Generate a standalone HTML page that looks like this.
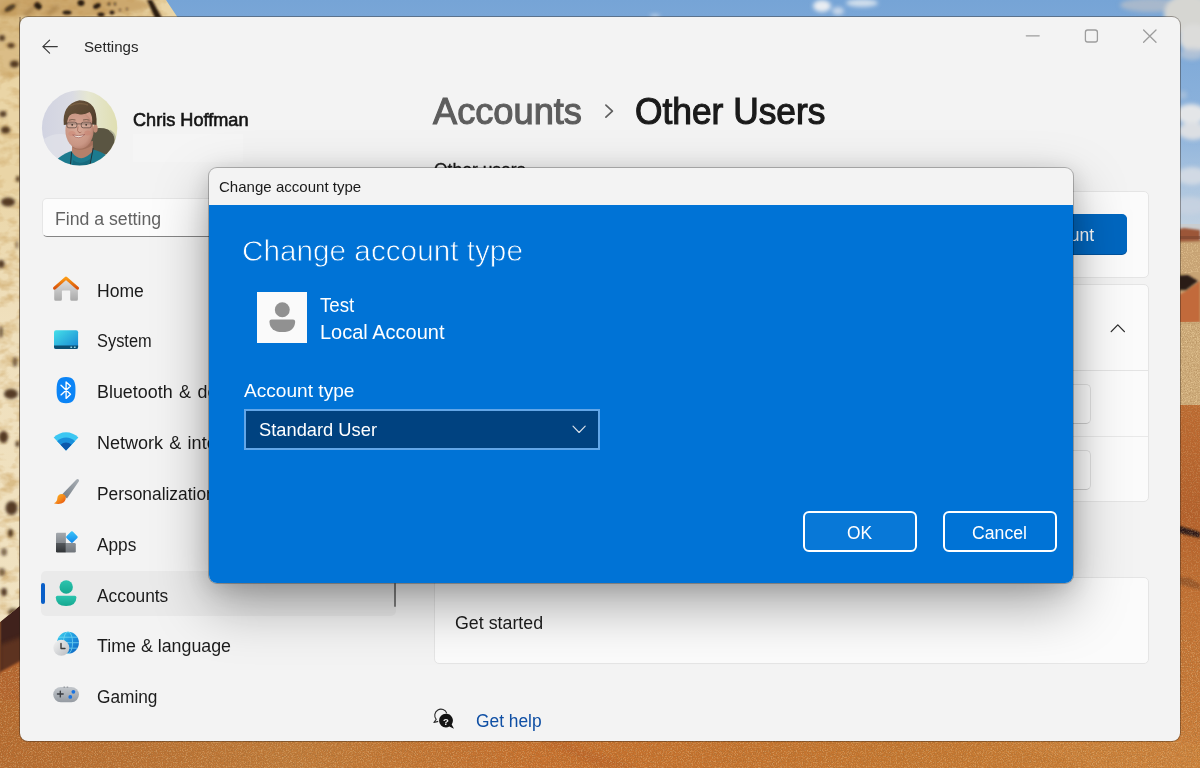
<!DOCTYPE html>
<html lang="en">
<head>
<meta charset="utf-8">
<title>Settings - Other Users</title>
<style>
*{box-sizing:border-box;margin:0;padding:0}
html,body{width:1200px;height:768px;overflow:hidden;background:#c07030}
body{position:relative;font-family:"Liberation Sans",sans-serif;color:#1b1b1b}
.abs{position:absolute}
.t{position:absolute;white-space:pre;line-height:1;transform-origin:0 0}
#wall{position:absolute;left:0;top:0;width:1200px;height:768px}
#win{position:absolute;left:20px;top:17px;width:1160px;height:724px;background:#f3f3f3;border-radius:8px;overflow:hidden;box-shadow:0 0 0 1px rgba(40,30,20,.38)}
/* coordinates inside #win are page coords minus (20,17); use .p wrapper to keep page coords */
#p{position:absolute;left:-20px;top:-17px;width:1200px;height:768px}
.card{position:absolute;background:#fbfbfb;border:1px solid #e5e5e5;border-radius:5px}
.nav{position:absolute;left:97px;font-size:17.5px;color:#1b1b1b}
#dlg{position:absolute;left:209px;top:168px;width:864px;height:415px;border-radius:8px;background:#f3f3f3;overflow:hidden;
 box-shadow:0 0 0 1px rgba(0,0,0,.24),0 22px 54px rgba(0,0,0,.34),0 4px 22px rgba(0,0,0,.15)}
#dtitle{position:absolute;left:0;top:0;width:100%;height:37px;background:#f3f3f3}
.dbtn{position:absolute;width:114.1px;height:40.8px;border:2.5px solid #fff;border-radius:6px}
</style>
</head>
<body>
<!-- WALLPAPER -->
<svg id="wall" viewBox="0 0 1200 768">
<defs>
  <linearGradient id="sky" x1="0" y1="0" x2="0" y2="1">
    <stop offset="0" stop-color="#76a4d6"/><stop offset="0.55" stop-color="#8fb4dc"/><stop offset="1" stop-color="#c9d6e2"/>
  </linearGradient>
  <linearGradient id="sandB" x1="0" y1="0" x2="1" y2="0">
    <stop offset="0" stop-color="#b66a2e"/><stop offset="0.25" stop-color="#c07a38"/><stop offset="0.45" stop-color="#c66f2c"/><stop offset="0.75" stop-color="#c4762f"/><stop offset="1" stop-color="#cb8038"/>
  </linearGradient>
  <linearGradient id="furL" x1="0" y1="0" x2="0" y2="1"><stop offset="0" stop-color="#f3e7cc" stop-opacity="0"/><stop offset=".3" stop-color="#f3e7cc" stop-opacity=".6"/><stop offset="1" stop-color="#f4e9d0" stop-opacity=".65"/></linearGradient>
  <linearGradient id="duneR" x1="0" y1="0" x2="0" y2="1"><stop offset="0" stop-color="#bd6a31"/><stop offset=".3" stop-color="#b4602b"/><stop offset=".55" stop-color="#c27133"/><stop offset="1" stop-color="#cb7e39"/></linearGradient>
  <filter id="bl1" x="-20%" y="-20%" width="140%" height="140%"><feGaussianBlur stdDeviation="1"/></filter>
  <filter id="bl15" x="-40%" y="-40%" width="180%" height="180%"><feGaussianBlur stdDeviation="1.5"/></filter>
  <filter id="bl2" x="-30%" y="-30%" width="160%" height="160%"><feGaussianBlur stdDeviation="2.2"/></filter>
  <filter id="bl4" x="-50%" y="-50%" width="200%" height="200%"><feGaussianBlur stdDeviation="4"/></filter>
  <filter id="grain" x="0" y="0" width="100%" height="100%">
    <feTurbulence type="fractalNoise" baseFrequency="0.85" numOctaves="2" seed="4" result="n"/>
    <feColorMatrix in="n" type="matrix" values="0 0 0 0 0.30  0 0 0 0 0.14  0 0 0 0 0.04  2.4 2.4 0 0 -2.25"/>
  </filter>
  <filter id="grainL" x="0" y="0" width="100%" height="100%">
    <feTurbulence type="fractalNoise" baseFrequency="0.8" numOctaves="2" seed="11" result="n"/>
    <feColorMatrix in="n" type="matrix" values="0 0 0 0 0.96  0 0 0 0 0.74  0 0 0 0 0.42  2.4 2.4 0 0 -2.3"/>
  </filter>
  <filter id="fur" x="0" y="0" width="100%" height="100%">
    <feTurbulence type="fractalNoise" baseFrequency="0.055 0.09" numOctaves="3" seed="9" result="n"/>
    <feColorMatrix in="n" type="matrix" values="0 0 0 0 0.62  0 0 0 0 0.40  0 0 0 0 0.15  3.0 0 0 0 -1.32"/>
  </filter>
  <clipPath id="sandclip"><path d="M0 674 L24 661 V741 H1180 V640 H1200 V768 H0 Z"/></clipPath>
  <clipPath id="cheetah"><path d="M0 0 H166 L190 36 V560 L22 604 L0 622 Z"/></clipPath>
</defs>
<!-- sky -->
<rect x="0" y="0" width="1200" height="240" fill="url(#sky)"/>
<!-- top clouds -->
<g filter="url(#bl2)" fill="#e9edf2">
  <ellipse cx="822" cy="6" rx="9" ry="6"/><ellipse cx="838" cy="11" rx="6" ry="4" opacity=".7"/>
  <ellipse cx="862" cy="3" rx="16" ry="4" opacity=".8"/><ellipse cx="655" cy="16" rx="5" ry="2" opacity=".6"/>
  <ellipse cx="1150" cy="5" rx="30" ry="7" fill="#b4bdc9" opacity=".8"/>
  <ellipse cx="1188" cy="14" rx="24" ry="20" fill="#d6d6d2"/>
  <ellipse cx="1194" cy="38" rx="15" ry="14" fill="#dcdcda"/>
  <ellipse cx="1192" cy="54" rx="12" ry="6" fill="#b9c6d6" opacity=".8"/>
  <ellipse cx="1191" cy="114" rx="15" ry="10" fill="#e4e6e8"/>
  <ellipse cx="1193" cy="131" rx="15" ry="9" fill="#dcdfe3"/>
  <ellipse cx="1183" cy="95" rx="4" ry="4" fill="#b4c6dc" opacity=".7"/>
  <ellipse cx="1192" cy="176" rx="16" ry="9" fill="#d3dae4" opacity=".95"/>
  <ellipse cx="1190" cy="206" rx="18" ry="9" fill="#c6d2e0" opacity=".95"/>
</g>
<!-- right desert -->
<rect x="1170" y="224" width="30" height="20" fill="#c9cdd0"/>
<rect x="1170" y="240" width="30" height="180" fill="#c7a374"/>
<path d="M1170 231 L1184 228 L1200 230 V241 L1170 242 Z" fill="#9c5738" filter="url(#bl1)"/>
<rect x="1170" y="236" width="30" height="3" fill="#7c4630" opacity=".6"/>
<path d="M1170 300 L1184 292 L1200 281 V322 L1170 324 Z" fill="#c26a3b" filter="url(#bl1)"/>
<path d="M1170 276 L1188 275 L1198 281 L1186 290 L1170 290 Z" fill="#2b1a14" filter="url(#bl1)"/>
<rect x="1170" y="322" width="30" height="86" fill="#cdab7a"/>
<rect x="1170" y="322" width="30" height="86" filter="url(#grain)" opacity=".3"/><rect x="1170" y="243" width="30" height="30" filter="url(#grainL)" opacity=".4"/><rect x="1170" y="324" width="30" height="82" filter="url(#grainL)" opacity=".45"/>
<rect x="1170" y="405" width="30" height="363" fill="url(#duneR)"/>
<path d="M1170 523 L1200 532 V538 L1170 531 Z" fill="#2a1812" filter="url(#bl1)"/>
<path d="M1170 576 L1190 578 L1200 584 V590 L1170 582 Z" fill="#7a4424" opacity=".55" filter="url(#bl1)"/>

<rect x="1170" y="405" width="30" height="236" filter="url(#grain)" opacity=".3"/><rect x="1170" y="405" width="30" height="236" filter="url(#grainL)" opacity=".2"/>
<!-- bottom sand -->
<path d="M0 640H1178V745H1200V768H0Z" fill="url(#sandB)"/>
<path d="M560 741 L640 768 H600 L540 741 Z" fill="#b85f26" opacity=".5" filter="url(#bl2)"/>
<path d="M1000 741 L1100 768 H1200 V741 Z" fill="#cf8540" opacity=".45" filter="url(#bl2)"/>

<!-- left: dark band below cheetah -->
<path d="M0 612 L24 596 V662 L0 674 Z" fill="#3f241b" filter="url(#bl1)"/><path d="M0 645 L24 636 V662 L0 674 Z" fill="#6b3b22" opacity=".7" filter="url(#bl2)"/>

<path d="M0 672 L24 659 V700 H0 Z" fill="#b5652f" filter="url(#bl1)"/>
<g clip-path="url(#sandclip)"><rect x="0" y="640" width="1200" height="128" filter="url(#grain)" opacity=".42"/><rect x="0" y="640" width="1200" height="128" filter="url(#grainL)" opacity=".3"/></g>
<!-- cheetah fur -->
<g clip-path="url(#cheetah)">
  <rect x="0" y="0" width="200" height="640" fill="#ead5a6"/><rect x="0" y="180" width="200" height="460" fill="url(#furL)"/>
  <rect x="0" y="0" width="200" height="640" filter="url(#fur)" opacity=".65"/>
  <g filter="url(#bl2)"><ellipse cx="62" cy="5" rx="88" ry="13" fill="#b5843f" opacity=".55"/><ellipse cx="8" cy="40" rx="14" ry="40" fill="#c39a58" opacity=".4"/>
    <path d="M2 14 L18 3 M24 16 L40 2 M48 14 L58 6" stroke="#7a5426" stroke-width="3" opacity=".5" fill="none"/></g>
  <g fill="#2b1a0d" filter="url(#bl1)">
    <ellipse cx="81" cy="3" rx="3.5" ry="3"/><ellipse cx="97" cy="6" rx="4" ry="2.5" transform="rotate(-25 97 6)"/>
    <ellipse cx="67" cy="12.5" rx="4.5" ry="2"/><ellipse cx="101" cy="14.5" rx="3.5" ry="2"/><ellipse cx="112" cy="12.5" rx="2.5" ry="2"/>
    <ellipse cx="109" cy="4" rx="1.6" ry="1.6" opacity=".7"/><ellipse cx="115" cy="4" rx="1.4" ry="1.4" opacity=".7"/>
    <ellipse cx="120" cy="10" rx="1.3" ry="1.3" opacity=".6"/><ellipse cx="127" cy="9" rx="1.3" ry="1.3" opacity=".6"/>
    <ellipse cx="38" cy="6" rx="4" ry="3" transform="rotate(40 38 6)"/><ellipse cx="10" cy="8" rx="6" ry="2.5" transform="rotate(-30 10 8)" opacity=".7"/>
    <path d="M147 0 L152 0 L162 18 L155 18 Z"/>
  </g>
  <g fill="#452a12" opacity=".9" filter="url(#bl15)">
    <ellipse cx="2" cy="38" rx="3" ry="3"/><ellipse cx="11" cy="45.5" rx="3.5" ry="2.5"/><ellipse cx="14.5" cy="64" rx="4.5" ry="3.5"/>
    <ellipse cx="3" cy="114" rx="3.5" ry="3"/><ellipse cx="5.5" cy="130" rx="4.5" ry="3.5"/><ellipse cx="18" cy="179" rx="2" ry="3"/>
    <ellipse cx="8" cy="202" rx="7" ry="4.5"/><ellipse cx="1" cy="264" rx="3.5" ry="4"/><ellipse cx="17" cy="245" rx="1.5" ry="4" opacity=".6"/>
    <ellipse cx="1" cy="332" rx="2" ry="6" opacity=".8"/><ellipse cx="15" cy="362" rx="2.5" ry="5" opacity=".7"/>
    <ellipse cx="11" cy="394" rx="7" ry="5"/><ellipse cx="3.5" cy="437" rx="4.5" ry="6"/><ellipse cx="17.5" cy="444" rx="2" ry="3"/>
    <ellipse cx="11.5" cy="508" rx="6" ry="7"/><ellipse cx="10.5" cy="533" rx="2.5" ry="4"/><ellipse cx="4" cy="552" rx="3" ry="4" opacity=".7"/>
    <ellipse cx="2" cy="572" rx="3" ry="4" opacity=".7"/><ellipse cx="4" cy="592" rx="3" ry="4"/><ellipse cx="13" cy="612" rx="5" ry="4" opacity=".8"/>
  </g>
  <rect x="19" y="17" width="2" height="600" fill="#4a3520" opacity=".35"/>
</g>

</svg>

<!-- SETTINGS WINDOW -->
<div id="win"><div id="p">
<!-- title bar -->
<svg class="abs" style="left:40px;top:38px" width="20" height="18" viewBox="40 38 20 18"><path d="M57.3 46.6H42.8M49.6 40.1L42.9 46.6L49.6 53.1" fill="none" stroke="#3a3a3a" stroke-width="1.2" stroke-linecap="round" stroke-linejoin="round"/></svg>
<span class="t" style="left:83.5px;top:39.4px;font-size:15px;color:#262626;transform:scaleX(1.005)">Settings</span>
<svg class="abs" style="left:1020px;top:24px" width="145" height="24" viewBox="1020 24 145 24" fill="none" stroke="#9d9d9d" stroke-width="1.3">
  <path d="M1026.3 35.8H1039.2" stroke-linecap="round"/>
  <rect x="1085.4" y="30" width="12" height="12" rx="2.2"/>
  <path d="M1143.6 30L1156 42.3M1156 30L1143.6 42.3" stroke-linecap="round"/>
</svg>

<!-- avatar -->
<svg class="abs" style="left:41px;top:89px" width="78" height="78" viewBox="41 89 78 78">
  <defs>
    <clipPath id="avc"><circle cx="79.6" cy="127.9" r="37.7"/></clipPath>
    <linearGradient id="avbg" x1="0" y1="0" x2="1" y2="0"><stop offset="0" stop-color="#d1d3e1"/><stop offset=".40" stop-color="#dadbe3"/><stop offset=".60" stop-color="#e6e7d2"/><stop offset="1" stop-color="#dfdeb0"/></linearGradient>
    <radialGradient id="avface" cx=".42" cy=".45" r=".65"><stop offset="0" stop-color="#d9aa98"/><stop offset=".7" stop-color="#c99684"/><stop offset="1" stop-color="#ad7663"/></radialGradient>
    <linearGradient id="avhair" x1="0" y1="0" x2="1" y2="1"><stop offset="0" stop-color="#6c563d"/><stop offset="1" stop-color="#4d3b2a"/></linearGradient>
    <filter id="avb" x="-20%" y="-20%" width="140%" height="140%"><feGaussianBlur stdDeviation=".75"/></filter>
  </defs>
  <g clip-path="url(#avc)">
    <rect x="41" y="89" width="78" height="78" fill="url(#avbg)"/>
    <ellipse cx="60" cy="150" rx="22" ry="16" fill="#e2e3ea" opacity=".7" filter="url(#avb)"/>
    <g filter="url(#avb)">
      <path d="M86 130 Q100 126.5 108 129.5 Q116.5 134 114.5 144 Q112 152.5 106 154.5 L86 151 Z" fill="#5a5442"/>
      <path d="M110 130.5 Q117 135 115 145" stroke="#a9ab94" stroke-width="1.6" fill="none" opacity=".8"/>
      <path d="M56 168 L58 158.5 Q65 152.5 73.5 150.5 L92.5 149.5 Q101 151 107.5 156 L110 168 Z" fill="#1d7a8e"/>
      <path d="M73 160 Q80 166 90 159 L91 167 H72 Z" fill="#166577" opacity=".7"/>
      <path d="M72.3 145 L71.8 152 Q80.5 164.5 92.6 151.5 L93 141 Z" fill="#b4806b"/>
      <path d="M72.3 147.5 Q81 153 92.8 145 L93 141 L72.3 144Z" fill="#8f5d4c" opacity=".45"/>
      <ellipse cx="95.4" cy="128.6" rx="2.3" ry="4.1" fill="#c08a74"/>
      <ellipse cx="79.9" cy="118.5" rx="14.6" ry="12.5" fill="#cd9b88"/><ellipse cx="79.5" cy="130.6" rx="14.1" ry="18.2" fill="url(#avface)"/>
      <ellipse cx="72" cy="133.5" rx="3.5" ry="2.6" fill="#cf8a78" opacity=".6"/><ellipse cx="87.6" cy="133" rx="3.2" ry="2.5" fill="#c9826f" opacity=".55"/>
      <path d="M63.8 125 Q61.8 104.5 79.5 100.3 Q98.2 101 96.5 125 L92 124.3 Q93 115.5 89.6 112 Q84 115.6 78 113.9 Q72.5 112.9 69.6 115.4 Q67.2 118.6 66.9 124.6 Z" fill="url(#avhair)"/>
      <path d="M70 106 Q78 101.5 88 105" stroke="#85694a" stroke-width="1.4" fill="none" opacity=".6"/>
      <path d="M65.2 123.9 H95" stroke="#4f3f39" stroke-width=".8" opacity=".85"/>
      <rect x="66.9" y="122.2" width="10" height="5.6" rx="2" fill="#d9c2b6" fill-opacity=".25" stroke="#5e4a42" stroke-width=".75"/>
      <rect x="81.3" y="122.2" width="10" height="5.6" rx="2" fill="#d9c2b6" fill-opacity=".25" stroke="#5e4a42" stroke-width=".75"/>
      <path d="M69 120.2 Q72 119 75.5 120 M83 120 Q86.5 119 89.5 120.2" stroke="#5b4636" stroke-width=".9" fill="none" opacity=".8"/>
      <circle cx="72.2" cy="124.8" r=".9" fill="#3d3029"/><circle cx="86.2" cy="124.8" r=".9" fill="#3d3029"/>
      <path d="M72.6 134.8 Q78.4 140.8 85 134.4 Q78.6 136.9 72.6 134.8Z" fill="#f3ebe2" stroke="#a1625a" stroke-width=".7"/>
      <path d="M78 126.5 Q76.6 131.4 79 132.6 Q80.5 132.9 81.4 132" stroke="#a66c5b" stroke-width=".9" fill="none"/>
      <path d="M71.6 152 L70.2 168 M93.2 148 L89.4 168" stroke="#1d2a30" stroke-width=".9" fill="none"/>
    </g>
  </g>
</svg>
<span class="t" style="left:133.2px;top:111.5px;font-size:17.5px;color:#141414;-webkit-text-stroke:.6px #141414;transform:scaleX(1.036)">Chris Hoffman</span>
<div class="abs" style="left:133px;top:134px;width:110px;height:27.5px;background:#f5f5f5"></div>

<!-- search -->
<div class="abs" style="left:42px;top:197.5px;width:354px;height:39.5px;background:#fcfcfc;border:1px solid #e6e6e6;border-bottom:1.8px solid #858585;border-radius:5px"></div>
<span class="t" style="left:55.2px;top:210.6px;font-size:17.5px;color:#626262;transform:scaleX(1.01)">Find a setting</span>

<!-- nav selected -->
<div class="abs" style="left:41px;top:571px;width:355px;height:45px;background:#eaeaea;border-radius:5px"></div>
<div class="abs" style="left:41px;top:583.3px;width:4px;height:20.4px;background:#0a5fc8;border-radius:2px"></div>
<div class="abs" style="left:393.6px;top:583px;width:2.4px;height:24px;background:#7f7f7f;border-radius:1px"></div>

<!-- nav labels -->
<span class="nav t" style="top:282.6px;transform:scaleX(1.004)">Home</span>
<span class="nav t" style="top:333.4px;transform:scaleX(.937)">System</span>
<span class="nav t" style="top:384.2px;transform:scaleX(1.022);word-spacing:1.5px">Bluetooth &amp; devices</span>
<span class="nav t" style="top:435.1px;transform:scaleX(1.03);word-spacing:1.2px">Network &amp; internet</span>
<span class="nav t" style="top:485.9px;transform:scaleX(.992)">Personalization</span>
<span class="nav t" style="top:536.7px;transform:scaleX(.985)">Apps</span>
<span class="nav t" style="top:587.5px;transform:scaleX(.99)">Accounts</span>
<span class="nav t" style="top:638.4px;transform:scaleX(1.018)">Time &amp; language</span>
<span class="nav t" style="top:689.2px;transform:scaleX(.987)">Gaming</span>
<svg class="abs" style="left:48px;top:270px" width="40" height="440" viewBox="48 270 40 440">
  <defs>
    <linearGradient id="gRoof" x1="0" y1="0" x2="0" y2="1"><stop offset="0" stop-color="#fb9a14"/><stop offset="1" stop-color="#d8520a"/></linearGradient>
    <linearGradient id="gHouse" x1="0" y1="0" x2="0" y2="1"><stop offset="0" stop-color="#e4e4e4"/><stop offset="1" stop-color="#a9a9a9"/></linearGradient>
    <linearGradient id="gSys" x1="0" y1="0" x2="1" y2="1"><stop offset="0" stop-color="#45e0ea"/><stop offset="1" stop-color="#1684d2"/></linearGradient>
    <linearGradient id="gBrushH" x1="1" y1="0" x2="0" y2="1"><stop offset="0" stop-color="#a9afb5"/><stop offset="1" stop-color="#747c84"/></linearGradient>
    <linearGradient id="gBrushB" x1="0" y1="0" x2="1" y2="1"><stop offset="0" stop-color="#ffbd22"/><stop offset=".55" stop-color="#f4861a"/><stop offset="1" stop-color="#e2480c"/></linearGradient>
    <linearGradient id="gApp1" x1="0" y1="0" x2="0" y2="1"><stop offset="0" stop-color="#a4a9ae"/><stop offset="1" stop-color="#84898f"/></linearGradient>
    <linearGradient id="gApp2" x1="0" y1="0" x2="0" y2="1"><stop offset="0" stop-color="#55595d"/><stop offset="1" stop-color="#2f3235"/></linearGradient>
    <linearGradient id="gApp3" x1="0" y1="0" x2="0" y2="1"><stop offset="0" stop-color="#8d9297"/><stop offset="1" stop-color="#6f747a"/></linearGradient>
    <linearGradient id="gDia" x1="0" y1="0" x2="1" y2="1"><stop offset="0" stop-color="#3cc6fa"/><stop offset="1" stop-color="#0f86ea"/></linearGradient>
    <linearGradient id="gAcc" x1="0" y1="0" x2="0" y2="1"><stop offset="0" stop-color="#2cc4ae"/><stop offset="1" stop-color="#15a890"/></linearGradient>
    <linearGradient id="gGlobe" x1="0" y1="0" x2="1" y2="1"><stop offset="0" stop-color="#3fd4ee"/><stop offset=".55" stop-color="#1b8fdc"/><stop offset="1" stop-color="#0f62bd"/></linearGradient>
    <linearGradient id="gClock" x1="0" y1="0" x2="1" y2="1"><stop offset="0" stop-color="#f4f4f4"/><stop offset="1" stop-color="#b9bcc0"/></linearGradient>
    <linearGradient id="gPad" x1="0" y1="0" x2="0" y2="1"><stop offset="0" stop-color="#c3c7cc"/><stop offset="1" stop-color="#959ba2"/></linearGradient>
  </defs>
  <!-- Home -->
  <path d="M54.2 288.6V299.3Q54.2 300.8 55.7 300.8H60.4Q61.9 300.8 61.9 299.3V291.2Q61.9 290.4 62.7 290.4H69.4Q70.2 290.4 70.2 291.2V299.3Q70.2 300.8 71.7 300.8H76.4Q77.9 300.8 77.9 299.3V288.6L66 278.5Z" fill="url(#gHouse)"/>
  <path d="M54.6 288.2L66 278.1L77.5 288.2" fill="none" stroke="url(#gRoof)" stroke-width="3.1" stroke-linecap="round" stroke-linejoin="round"/>
  <!-- System -->
  <rect x="54" y="330.2" width="24.1" height="18.8" rx="2" fill="url(#gSys)"/>
  <path d="M54 345.4H78.1V347Q78.1 349 76.1 349H56Q54 349 54 347Z" fill="#0c4f73"/>
  <rect x="70.4" y="346.6" width="1.7" height="1.3" fill="#9fe6f2"/><rect x="73.9" y="346.6" width="1.7" height="1.3" fill="#9fe6f2"/>
  <!-- Bluetooth -->
  <path d="M66 377C73.6 377 75.5 381 75.5 390.1C75.5 399.3 73.6 403.3 66 403.3C58.5 403.3 56.6 399.3 56.6 390.1C56.6 381 58.5 377 66 377Z" fill="#0b84f6"/>
  <path d="M61 385.3L70.5 394.3L66.1 398.4V381.9L70.5 386L61 394.9" fill="none" stroke="#fff" stroke-width="1.35" stroke-linejoin="round" stroke-linecap="round"/>
  <!-- Network -->
  <path d="M66 450.6L53.7 437.4A17.6 17.6 0 0 1 78.4 437.4Z" fill="#3cc7f2"/>
  <path d="M66 450.6L57.2 441.2A12.6 12.6 0 0 1 74.9 441.2Z" fill="#1a8fdb"/>
  <path d="M66 450.6L60.6 444.8A7.7 7.7 0 0 1 71.5 444.8Z" fill="#0c58aa"/>
  <!-- Personalization -->
  <path d="M76.2 479.7Q77.6 478.5 78.7 479.6Q79.4 480.5 78.7 481.6L67 498.4L62 494.6Z" fill="url(#gBrushH)"/>
  <path d="M62.6 494Q66.5 495.2 65.7 499.1Q64.7 503.8 58.6 503.9Q55.7 504 53.9 503.3Q57.2 501.9 57.3 498.6Q57.6 493.6 62.6 494Z" fill="url(#gBrushB)"/>
  <!-- Apps -->
  <path d="M57.3 532.7H65.9V542.9H56V534Q56 532.7 57.3 532.7Z" fill="url(#gApp1)"/>
  <path d="M56 542.9H65.9V552.6H57.3Q56 552.6 56 551.3Z" fill="url(#gApp2)"/>
  <path d="M65.9 542.9H74.5Q75.8 542.9 75.8 544.2V551.3Q75.8 552.6 74.5 552.6H65.9Z" fill="url(#gApp3)"/>
  <rect x="67.45" y="532.6" width="8.9" height="8.9" rx="1.2" transform="rotate(45 71.9 537.05)" fill="url(#gDia)"/>
  <!-- Accounts -->
  <circle cx="66.2" cy="587" r="6.7" fill="url(#gAcc)"/>
  <path d="M57.4 595.8H74.8Q76.4 595.8 76.4 597.4Q76.2 605.9 66.1 605.9Q56 605.9 55.8 597.4Q55.8 595.8 57.4 595.8Z" fill="url(#gAcc)"/>
  <!-- Time & language -->
  <circle cx="68" cy="642.7" r="10.9" fill="url(#gGlobe)"/>
  <g fill="none" stroke="#7fe0f5" stroke-width=".9" opacity=".75"><ellipse cx="68" cy="642.7" rx="4.6" ry="10.9"/><path d="M57.1 642.7H78.9M58.6 637.2H77.4M58.6 648.2H77.4"/></g>
  <circle cx="61.3" cy="647.8" r="8" fill="url(#gClock)"/>
  <path d="M61 643.5V648.5H65" fill="none" stroke="#3b3b3b" stroke-width="1.4" stroke-linecap="round" stroke-linejoin="round"/>
  <!-- Gaming -->
  <rect x="53.2" y="687" width="25.8" height="15.2" rx="7.6" fill="url(#gPad)"/>
  <path d="M57.4 694H63.2M60.3 691.1V696.9" stroke="#3a3d42" stroke-width="1.3" stroke-linecap="round"/>
  <circle cx="73.4" cy="691.8" r="1.9" fill="#1a73e0"/><circle cx="70.3" cy="696.9" r="1.9" fill="#1a73e0"/>
  <rect x="63.5" y="686.6" width="1.6" height="1" fill="#80858c"/><rect x="66.6" y="686.6" width="1.6" height="1" fill="#80858c"/>
</svg>


<!-- header -->
<span class="t" style="left:433.4px;top:93.9px;font-size:36px;color:#5d5d5d;-webkit-text-stroke:1.1px #5d5d5d;transform:scaleX(1.006)">Accounts</span>
<svg class="abs" style="left:602px;top:102px" width="14" height="18" viewBox="602 102 14 18"><path d="M605.9 105.2L612.4 111.2L605.9 117.2" fill="none" stroke="#5f5f5f" stroke-width="1.7" stroke-linecap="round" stroke-linejoin="round"/></svg>
<span class="t" style="left:634.6px;top:93.6px;font-size:36px;color:#1a1a1a;-webkit-text-stroke:1.1px #1a1a1a;transform:scaleX(.981)">Other Users</span>
<span class="t" style="left:434px;top:162px;font-size:17.5px;color:#1b1b1b;-webkit-text-stroke:.3px #1b1b1b">Other users</span>

<!-- cards -->
<div class="card" style="left:434px;top:191px;width:714.5px;height:87px"></div>
<div class="abs" style="left:960px;top:214px;width:167px;height:39.6px;background:#0067c0;border-radius:5px;box-shadow:0 1px 0 #00539e"></div>
<span class="t" style="left:996.8px;top:227.4px;font-size:17.5px;color:#fff">Add account</span>
<div class="card" style="left:434px;top:283.5px;width:714.5px;height:218.5px"></div>
<div class="abs" style="left:435px;top:370px;width:712.5px;height:1px;background:#e4e4e4"></div>
<div class="abs" style="left:435px;top:436px;width:712.5px;height:1px;background:#e9e9e9"></div>
<svg class="abs" style="left:1106px;top:320px" width="24" height="16" viewBox="1106 320 24 16"><path d="M1111.2 331.6L1117.8 324.9L1124.4 331.6" fill="none" stroke="#2a2a2a" stroke-width="1.3" stroke-linecap="round" stroke-linejoin="round"/></svg>
<div class="abs" style="left:900px;top:384.3px;width:190.5px;height:39.5px;background:#fdfdfd;border:1px solid #e3e3e3;border-bottom-color:#cfcfcf;border-radius:5px"></div>
<span class="t" style="left:913.4px;top:397.6px;font-size:17.5px;color:#1b1b1b;transform:scaleX(.972)">Change account type</span>
<div class="abs" style="left:1000px;top:450.2px;width:90.5px;height:39.5px;background:#fdfdfd;border:1px solid #e3e3e3;border-bottom-color:#cfcfcf;border-radius:5px"></div>
<div class="card" style="left:434px;top:577px;width:714.5px;height:86.5px"></div>
<span class="t" style="left:455.2px;top:614.7px;font-size:17.5px;color:#1c1c1c;transform:scaleX(1.018)">Get started</span>

<!-- get help -->
<svg class="abs" style="left:430px;top:706px" width="28" height="26" viewBox="430 706 28 26">
  <path d="M446.8 713.4A6.2 6.2 0 1 0 436.2 719.4L433.9 722.5L438.2 721.4" fill="none" stroke="#2a2a2a" stroke-width="1.1" stroke-linejoin="round"/>
  <path d="M445.8 713.8a6.8 6.8 0 1 0 .1 13.6 6.8 6.8 0 0 0 3.4-.9l4.7 2.2-2.3-4.3a6.8 6.8 0 0 0-5.9-10.6z" fill="#141414"/>
  <text x="445.9" y="724.8" font-family="Liberation Sans" font-weight="700" font-size="9.6" text-anchor="middle" fill="#f3f3f3">?</text>
</svg>
<span class="t" style="left:476.2px;top:712.7px;font-size:17.5px;color:#0f4fa4;transform:scaleX(.992)">Get help</span>

</div></div>

<!-- DIALOG -->
<div id="dlg">
<div class="abs" style="left:0;top:37px;width:864px;height:378px;background:#0073d6"></div>
<span class="t" style="left:10.3px;top:10.6px;font-size:15px;color:#1a1a1a;transform:scaleX(1.003)">Change account type</span>
<span class="t" style="left:33.4px;top:67.4px;font-size:30.4px;color:#fff;-webkit-text-stroke:.8px #0073d6;transform:scaleX(.978)">Change account type</span>
<!-- user tile -->
<div class="abs" style="left:47.7px;top:124px;width:50.7px;height:50.8px;background:#fafafa"></div>
<svg class="abs" style="left:47.7px;top:124px" width="51" height="51" viewBox="0 0 51 51"><circle cx="25.3" cy="17.8" r="7.45" fill="#919191"/><path d="M14.6 27.5H36Q38.2 27.5 38.2 29.7Q37.6 40.1 25.3 40.1Q13 40.1 12.4 29.7Q12.4 27.5 14.6 27.5Z" fill="#919191"/></svg>
<span class="t" style="left:111.4px;top:128.4px;font-size:19.7px;color:#fff;transform:scaleX(.95)">Test</span>
<span class="t" style="left:111.4px;top:155.4px;font-size:19.7px;color:#fff;transform:scaleX(1.016)">Local Account</span>
<span class="t" style="left:35px;top:212.5px;font-size:19px;color:#fff;transform:scaleX(1.006)">Account type</span>
<!-- dropdown -->
<div class="abs" style="left:35.2px;top:241.2px;width:355.4px;height:40.5px;background:#004280;border:2.4px solid #62a6e8"></div>
<span class="t" style="left:50.4px;top:251.5px;font-size:19px;color:#fff;transform:scaleX(.963)">Standard User</span>
<svg class="abs" style="left:360px;top:254px" width="20" height="14" viewBox="0 0 20 14"><path d="M4 4.2L10.1 10.5L16.2 4.2" fill="none" stroke="#d9e0e8" stroke-width="1.15" stroke-linecap="round" stroke-linejoin="round"/></svg>
<!-- buttons -->
<div class="dbtn" style="left:593.9px;top:343.1px;background:#0878d7"></div>
<div class="dbtn" style="left:733.8px;top:343.1px"></div>
<span class="t" style="left:638px;top:356.1px;font-size:18.3px;color:#fff;transform:scaleX(.95)">OK</span>
<span class="t" style="left:763.3px;top:356.1px;font-size:18.3px;color:#fff;transform:scaleX(.966)">Cancel</span>

</div>
</body>
</html>
